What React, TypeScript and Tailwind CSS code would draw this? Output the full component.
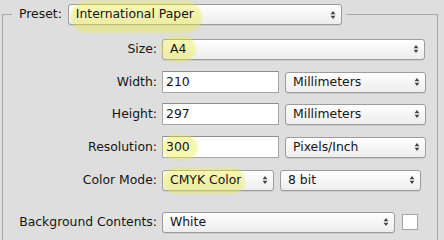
import { ReactNode } from "react";

const font = "font-['DejaVu_Sans',sans-serif] text-[12.4px] text-[#151515]";

function Arrows() {
    return (
        <svg width="6" height="10" viewBox="0 0 6 10" className="shrink-0">
            <path d="M3 1 L5.4 4.2 L0.6 4.2 Z" fill="#444" />
            <path d="M3 9 L5.4 5.8 L0.6 5.8 Z" fill="#444" />
        </svg>
    );
}

function Select({ className, children }: { className: string; children: ReactNode }) {
    return (
        <div className={`flex items-center justify-between h-[21px] pl-[7px] pr-[5px] rounded-[3px] border border-[#9c9c9c] bg-gradient-to-b from-white to-[#ededed] shadow-[0_1px_0_rgba(0,0,0,0.08)] ${className}`}>
            <span className="whitespace-nowrap">{children}</span>
            <Arrows />
        </div>
    );
}

function Input({ className, children }: { className: string; children: ReactNode }) {
    return (
        <div className={`flex items-center h-[22px] pl-[3px] bg-white border border-[#a6a6a6] border-t-[#8e8e8e] ${className}`}>
            {children}
        </div>
    );
}

// highlighter-pen blob drawn behind the text
function Mark({ box, children }: { box: string; children: ReactNode }) {
    return (
        <span className="relative inline-block">
            <span className={`absolute rounded-full bg-[rgba(238,236,70,0.42)] blur-[1px] ${box}`} />
            <span className="relative">{children}</span>
        </span>
    );
}

function Row({ label, top, children }: { label: string; top: string; children: ReactNode }) {
    return (
        <div className={`flex items-center h-[22px] ${top}`}>
            <div className="w-[155px] text-right pr-[1px]">{label}</div>
            <div className="flex items-center gap-[6px] pl-[5px]">{children}</div>
        </div>
    );
}

export default function App() {
    return (
        <div className={`h-[240px] w-[444px] overflow-hidden bg-[#dedede] ${font}`}>
            <fieldset className="ml-[2px] mr-[6px] mt-[4px] h-[300px] border border-b-0 border-[#a9a9a9]">
                <legend className="ml-[9px] pl-[7px] pr-[4px]">
                    <div className="flex items-center gap-[6px] h-[21px]">
                        <span>Preset:</span>
                        <Select className="w-[274px]">
                            <Mark box="-left-[5px] -right-[8px] -top-[4px] -bottom-[9px]">International Paper</Mark>
                        </Select>
                    </div>
                </legend>

                <div className="flex flex-col">
                    <Row label="Size:" top="mt-[13px]">
                        <Select className="w-[263px] -ml-[1px]">
                            <Mark box="-left-[9px] -right-[10px] -top-[4px] -bottom-[4px]">A4</Mark>
                        </Select>
                    </Row>
                    <Row label="Width:" top="mt-[11px]">
                        <Input className="w-[117px] -ml-[1px]">210</Input>
                        <Select className="w-[141px]">Millimeters</Select>
                    </Row>
                    <Row label="Height:" top="mt-[10px]">
                        <Input className="w-[117px] -ml-[1px]">297</Input>
                        <Select className="w-[141px]">Millimeters</Select>
                    </Row>
                    <Row label="Resolution:" top="mt-[11px]">
                        <Input className="w-[117px] -ml-[1px]">
                            <Mark box="-left-[4px] -right-[8px] -top-[3px] -bottom-[4px]">300</Mark>
                        </Input>
                        <Select className="w-[141px]">Pixels/Inch</Select>
                    </Row>
                    <Row label="Color Mode:" top="mt-[11px]">
                        <Select className="w-[112px] -ml-[1px]">
                            <Mark box="-left-[7px] -right-[4px] -top-[3px] -bottom-[5px]">CMYK Color</Mark>
                        </Select>
                        <Select className="w-[141px]">8 bit</Select>
                    </Row>
                    <Row label="Background Contents:" top="mt-[20px]">
                        <Select className="w-[233px] -ml-[1px]">White</Select>
                        <div className="ml-[1px] w-[16px] h-[16px] bg-white border border-[#a3a3a3]" />
                    </Row>
                </div>
            </fieldset>
        </div>
    );
}
